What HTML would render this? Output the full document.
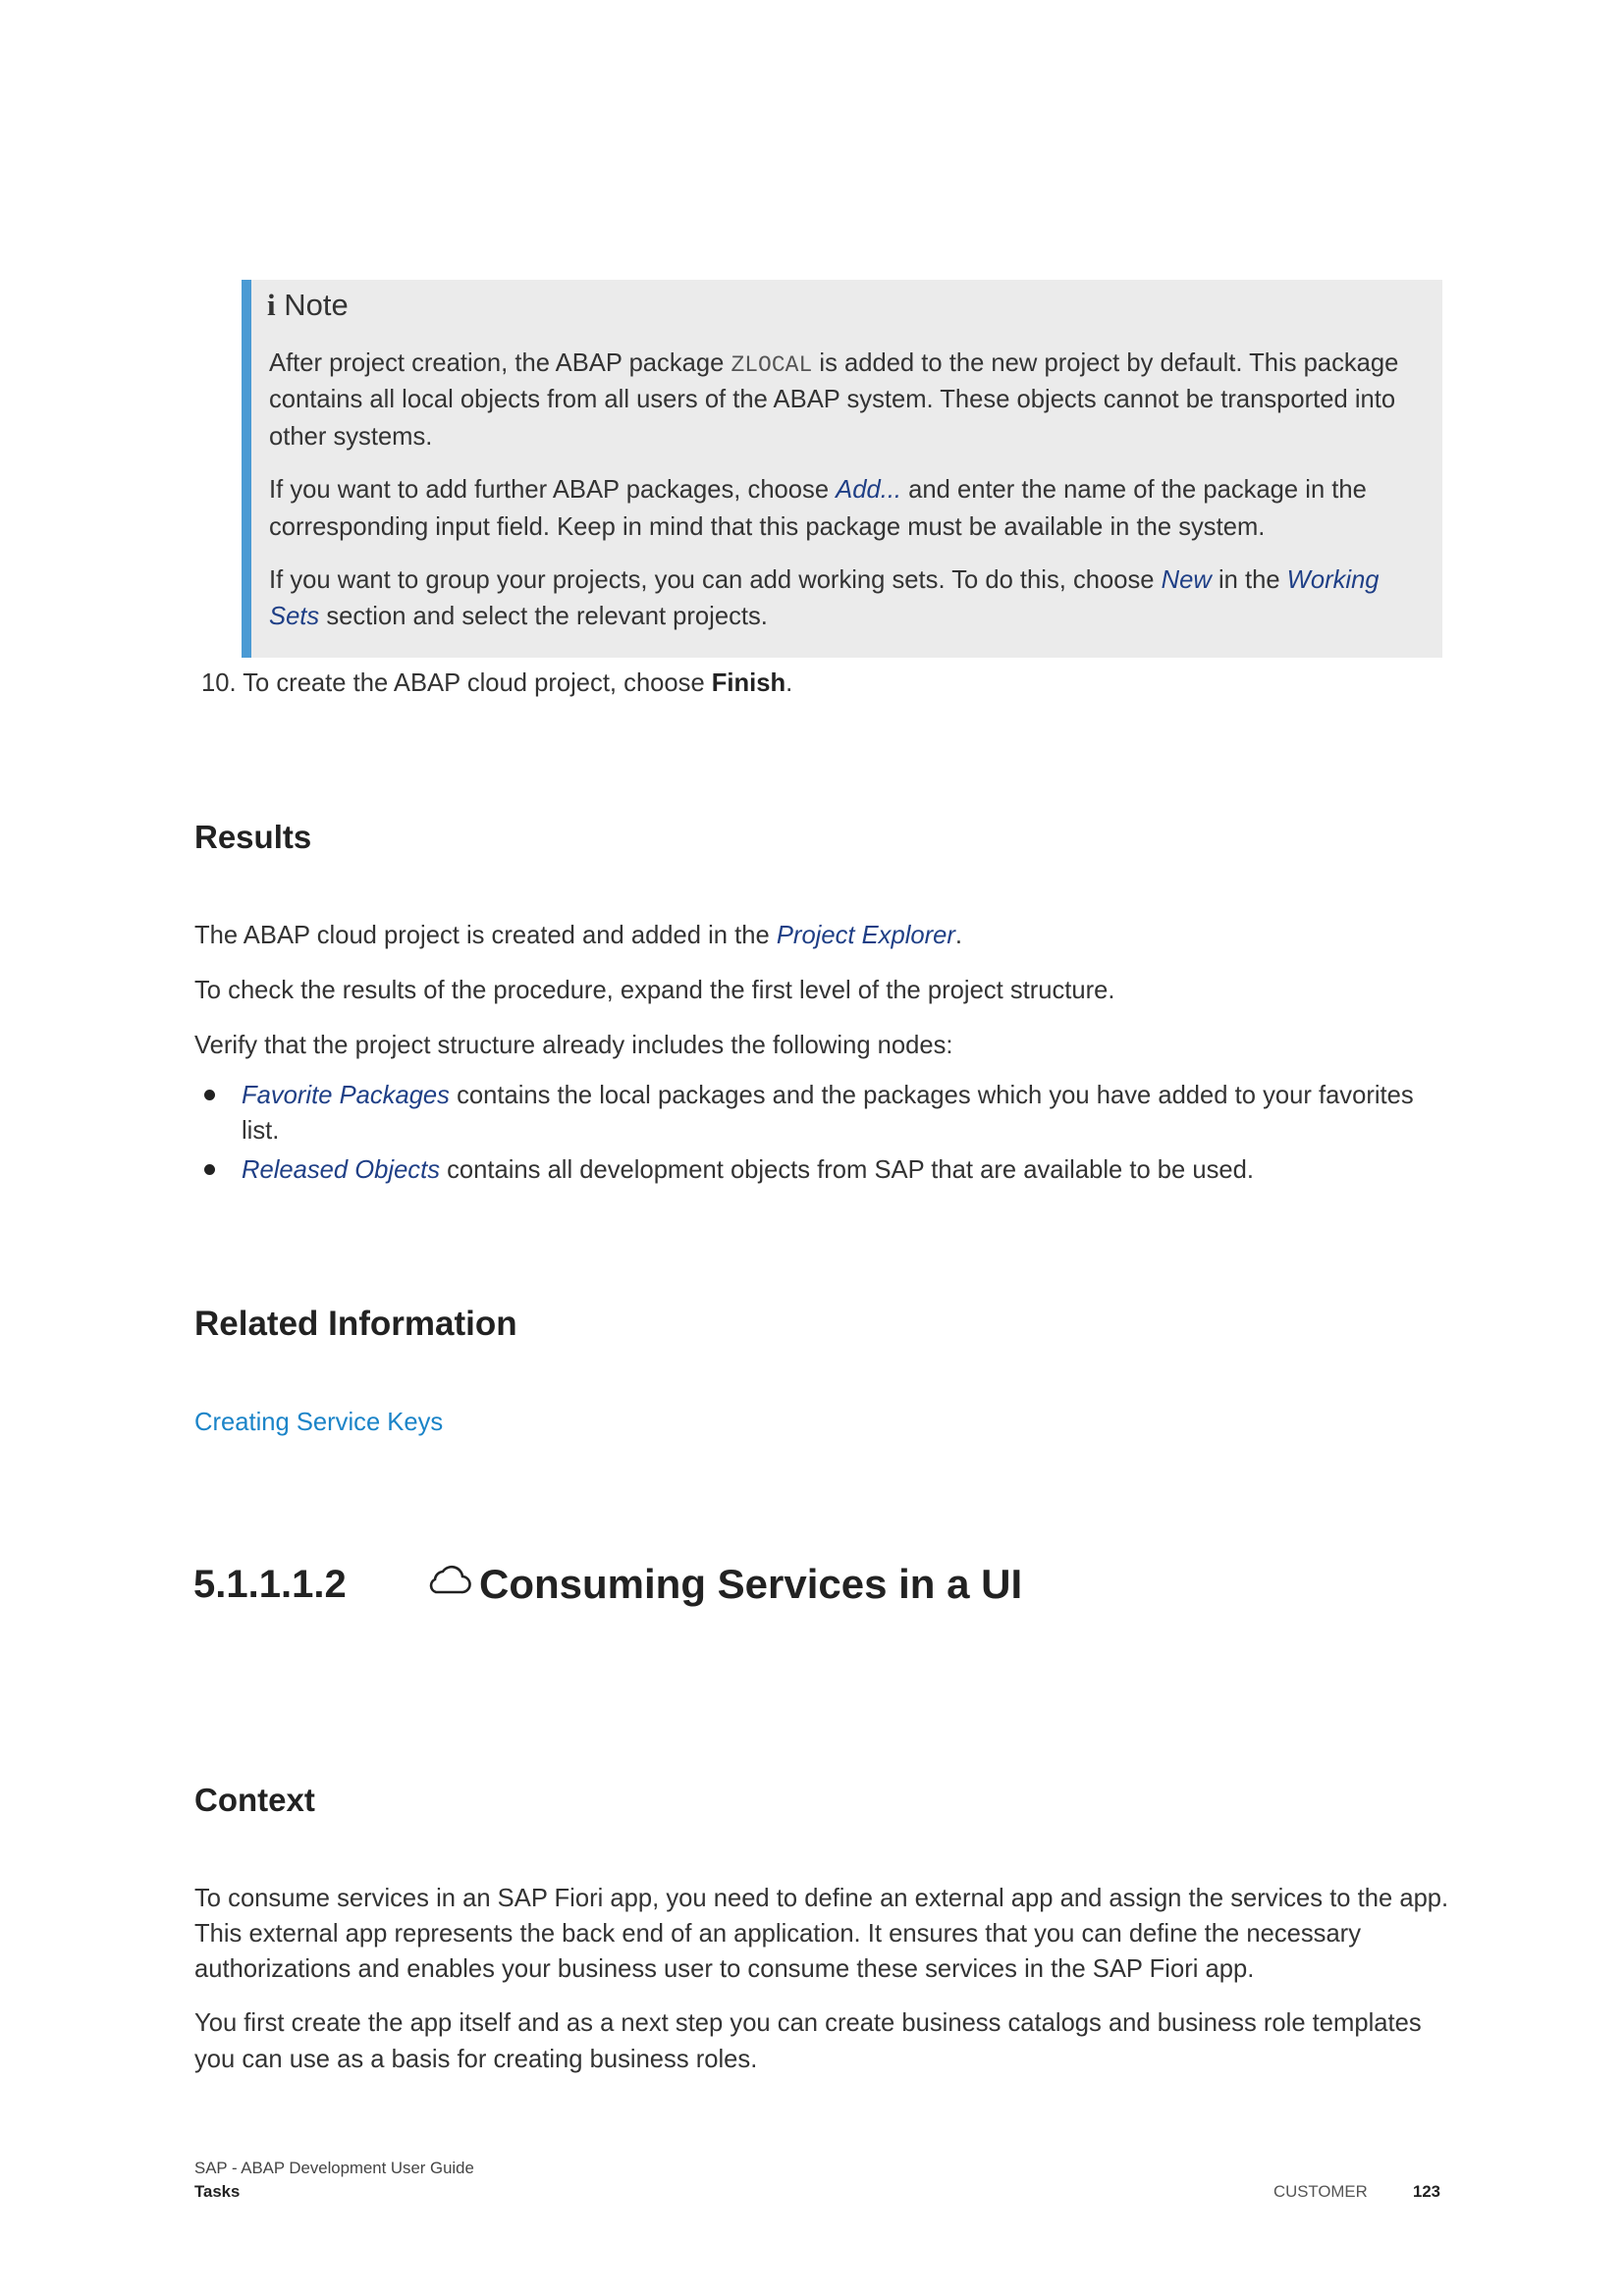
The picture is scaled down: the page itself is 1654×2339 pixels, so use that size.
<!DOCTYPE html>
<html><head><meta charset="utf-8"><style>
html,body{margin:0;padding:0;background:#fff;}
body{width:1654px;height:2339px;position:relative;overflow:hidden;font-family:"Liberation Sans",sans-serif;color:#333;}
.l{position:absolute;white-space:nowrap;font-size:25.6px;line-height:36px;height:36px;}
.i{font-style:italic;color:#1f3f86;}
.h{position:absolute;white-space:nowrap;font-weight:bold;color:#222;font-size:33px;line-height:44px;}
.mono{font-family:"Liberation Mono",monospace;font-size:23px;color:#555;}
.box{position:absolute;left:246px;top:285px;width:1223px;height:385px;background:#ebebeb;}
.bar{position:absolute;left:246px;top:285px;width:10px;height:385px;background:#4a9ad4;}
.dot{position:absolute;width:11px;height:11px;border-radius:50%;background:#222;left:208px;}
</style></head><body>
<div class="box"></div><div class="bar"></div>
<div class="l" style="left:272px;top:291px;font-size:31px;line-height:40px;height:40px;color:#333"><b style="font-family:'Liberation Serif',serif">i</b> Note</div>
<div class="l" style="left:274px;top:352px">After project creation, the ABAP package <span class="mono">ZLOCAL</span> is added to the new project by default. This package</div>
<div class="l" style="left:274px;top:389px">contains all local objects from all users of the ABAP system. These objects cannot be transported into</div>
<div class="l" style="left:274px;top:427px">other systems.</div>
<div class="l" style="left:274px;top:481px">If you want to add further ABAP packages, choose <span class="i">Add...</span> and enter the name of the package in the</div>
<div class="l" style="left:274px;top:519px">corresponding input field. Keep in mind that this package must be available in the system.</div>
<div class="l" style="left:274px;top:573px">If you want to group your projects, you can add working sets. To do this, choose <span class="i">New</span> in the <span class="i">Working</span></div>
<div class="l" style="left:274px;top:610px"><span class="i">Sets</span> section and select the relevant projects.</div>
<div class="l" style="left:205px;top:678px">10. To create the ABAP cloud project, choose <b style="color:#222">Finish</b>.</div>

<div class="h" style="left:198px;top:831px">Results</div>
<div class="l" style="left:198px;top:935px">The ABAP cloud project is created and added in the <span class="i">Project Explorer</span>.</div>
<div class="l" style="left:198px;top:991px">To check the results of the procedure, expand the first level of the project structure.</div>
<div class="l" style="left:198px;top:1047px">Verify that the project structure already includes the following nodes:</div>
<div class="dot" style="top:1110px"></div>
<div class="l" style="left:246px;top:1098px"><span class="i">Favorite Packages</span> contains the local packages and the packages which you have added to your favorites</div>
<div class="l" style="left:246px;top:1134px">list.</div>
<div class="dot" style="top:1186px"></div>
<div class="l" style="left:246px;top:1174px"><span class="i">Released Objects</span> contains all development objects from SAP that are available to be used.</div>

<div class="h" style="left:198px;top:1327px;font-size:35px">Related Information</div>
<div class="l" style="left:198px;top:1431px;color:#1b84c8">Creating Service Keys</div>

<div class="h" style="left:197px;top:1586px;font-size:40px;line-height:56px">5.1.1.1.2</div>
<svg style="position:absolute;left:434px;top:1592px" width="46" height="34" viewBox="0 0 46 34"><path d="M10 30 H36 A8 8 0 0 0 37 14 A11 11 0 0 0 17 9 A9 9 0 0 0 9 17 A7 7 0 0 0 10 30 Z" fill="none" stroke="#222" stroke-width="2.6"/></svg>
<div class="h" style="left:488px;top:1586px;font-size:42px;line-height:56px">Consuming Services in a UI</div>

<div class="h" style="left:198px;top:1812px">Context</div>
<div class="l" style="left:198px;top:1916px">To consume services in an SAP Fiori app, you need to define an external app and assign the services to the app.</div>
<div class="l" style="left:198px;top:1952px">This external app represents the back end of an application. It ensures that you can define the necessary</div>
<div class="l" style="left:198px;top:1988px">authorizations and enables your business user to consume these services in the SAP Fiori app.</div>
<div class="l" style="left:198px;top:2043px">You first create the app itself and as a next step you can create business catalogs and business role templates</div>
<div class="l" style="left:198px;top:2080px">you can use as a basis for creating business roles.</div>

<div class="l" style="left:198px;top:2197px;font-size:16.8px;line-height:24px;color:#444">SAP - ABAP Development User Guide</div>
<div class="l" style="left:198px;top:2221px;font-size:16.8px;line-height:24px;font-weight:bold;color:#222">Tasks</div>
<div class="l" style="left:1297px;top:2221px;font-size:16.8px;line-height:24px;color:#555">CUSTOMER</div>
<div class="l" style="left:1439px;top:2221px;font-size:16.8px;line-height:24px;font-weight:bold;color:#222">123</div>
</body></html>
